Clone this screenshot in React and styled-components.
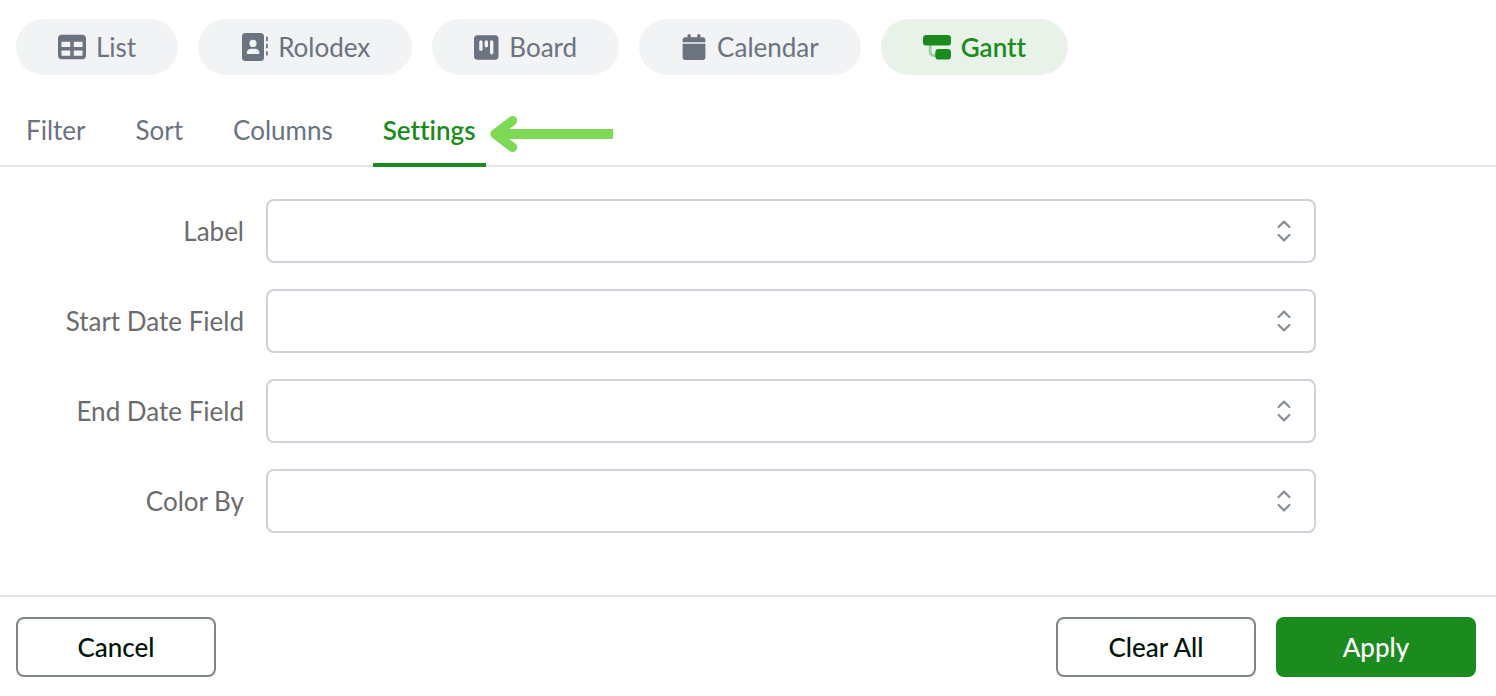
import React, { useState } from "react"
import styled, { createGlobalStyle } from "styled-components"
import { FaCalendar, FaTable } from "react-icons/fa6"

const RolodexIcon = () => (
  <svg width="28" height="28" viewBox="0 0 28 28" fill="currentColor" aria-hidden="true">
    <path
      fillRule="evenodd"
      d="M5.5 0h15A3.5 3.5 0 0 1 24 3.5v21a3.5 3.5 0 0 1-3.5 3.5h-15A3.5 3.5 0 0 1 2 24.5v-21A3.5 3.5 0 0 1 5.5 0zM13 14a3.6 3.6 0 1 0 0-7.2 3.6 3.6 0 0 0 0 7.2zM11 15.7a4.2 4.2 0 0 0-4.2 4.4c0 .6.4 1 .9 1h10.8c.5 0 .9-.4.9-1a4.2 4.2 0 0 0-4.2-4.4z"
    />
    <rect x="26" y="3.5" width="1.8" height="4.6" rx="0.9" />
    <rect x="26" y="10.7" width="1.8" height="4.6" rx="0.9" />
    <rect x="26" y="18" width="1.8" height="4.6" rx="0.9" />
  </svg>
)

const BoardIcon = () => (
  <svg width="25" height="25" viewBox="0 0 25 25" aria-hidden="true">
    <rect width="24.5" height="24.5" y="0.2" rx="3.5" fill="currentColor" />
    <g fill="#f1f3f5">
      <rect x="5.2" y="5.2" width="3.4" height="10.8" rx="1.7" />
      <rect x="10.6" y="5.2" width="3.4" height="7.2" rx="1.7" />
      <rect x="16" y="5.2" width="3.4" height="14.2" rx="1.7" />
    </g>
  </svg>
)

const GanttIcon = () => (
  <svg width="28" height="25" viewBox="0 0 28 25" aria-hidden="true">
    <path d="M7.2 10v7a3.5 3.5 0 0 0 3.5 3.5H13" fill="none" stroke="#a0cea3" strokeWidth="2.8" />
    <rect width="28" height="10.6" rx="3.4" fill="currentColor" />
    <rect x="12.3" y="14" width="15.7" height="10.6" rx="3.4" fill="currentColor" />
  </svg>
)

const Sorter = () => (
  <svg width="14" height="22" viewBox="0 0 14 22" fill="none" stroke="#868e96" aria-hidden="true">
    <path
      d="M1.6 7 7 1.6 12.4 7M1.6 15 7 20.4 12.4 15"
      strokeWidth="2.2"
      strokeLinecap="round"
      strokeLinejoin="round"
    />
  </svg>
)

const views = [
  { name: "List", icon: <FaTable size={28} /> },
  { name: "Rolodex", icon: <RolodexIcon /> },
  { name: "Board", icon: <BoardIcon /> },
  { name: "Calendar", icon: <FaCalendar width={25} height={28} /> },
  { name: "Gantt", icon: <GanttIcon /> },
]

const tabs = ["Filter", "Sort", "Columns", "Settings"]

const fields = [
  { id: "label", text: "Label" },
  { id: "start-date", text: "Start Date Field" },
  { id: "end-date", text: "End Date Field" },
  { id: "color-by", text: "Color By" },
]

const App = () => {
  const [view, setView] = useState("Gantt")
  const [tab, setTab] = useState("Settings")

  return (
    <>
      <GlobalStyle />
      <Views>
        {views.map(({ name, icon }) => (
          <ViewButton key={name} $active={name === view} onClick={() => setView(name)}>
            {icon}
            {name}
          </ViewButton>
        ))}
      </Views>
      <Tabs>
        {tabs.map(name => (
          <Tab key={name} $active={name === tab} onClick={() => setTab(name)}>
            {name}
          </Tab>
        ))}
        <Arrow viewBox="0 0 123 36" aria-hidden="true">
          <path d="M10 18h113" strokeWidth="10" />
          <path d="M22.5 4.7 5 18l17.5 13.3" strokeWidth="9.4" strokeLinecap="round" strokeLinejoin="round" />
        </Arrow>
      </Tabs>
      <Form>
        {fields.map(({ id, text }) => (
          <Field key={id}>
            <Label htmlFor={id}>{text}</Label>
            <SelectWrapper>
              <Select id={id} />
              <Sorter />
            </SelectWrapper>
          </Field>
        ))}
      </Form>
      <Footer>
        <Button>Cancel</Button>
        <Actions>
          <Button>Clear All</Button>
          <Button $primary>Apply</Button>
        </Actions>
      </Footer>
    </>
  )
}

const GlobalStyle = createGlobalStyle`
  * {
    box-sizing: border-box;
  }

  body {
    margin: 0;
    background-color: #fff;
    font-family: Lato, "Liberation Sans", sans-serif;
    font-size: 26px;
    font-variant-ligatures: none;
    line-height: 32px;
  }

  button,
  select {
    font: inherit;
    font-variant-ligatures: none;
    cursor: pointer;
  }
`

const Views = styled.div`
  display: flex;
  gap: 20px;
  padding: 19px 16px 0;
`

const ViewButton = styled.button`
  display: flex;
  align-items: center;
  gap: 10px;
  height: 56px;
  padding: 0 42px;
  border: 0;
  border-radius: 28px;
  background-color: ${({ $active }) => ($active ? "#e8f2e9" : "#f1f3f5")};
  color: ${({ $active }) => ($active ? "#1b8b20" : "#6b7280")};
  font-weight: ${({ $active }) => ($active ? 600 : 400)};

  svg {
    flex-shrink: 0;
  }
`

const Tabs = styled.nav`
  display: flex;
  gap: 30px;
  margin-top: 32px;
  padding: 0 16px;
  border-bottom: 2px solid #e5e6eb;
`

const Tab = styled.button`
  height: 60px;
  margin-bottom: -2px;
  padding: 0 10px 10px;
  border: 0;
  border-bottom: 4px solid ${({ $active }) => ($active ? "#1b8b20" : "transparent")};
  background: none;
  color: ${({ $active }) => ($active ? "#1b8b20" : "#6b7280")};
  font-weight: ${({ $active }) => ($active ? 600 : 400)};
`

const Arrow = styled.svg`
  width: 123px;
  height: 36px;
  margin: 9px 0 0 -26px;
  fill: none;
  stroke: #7ed957;
`

const Form = styled.form`
  display: flex;
  flex-direction: column;
  gap: 26px;
  padding: 32px 180px 62px 0;
`

const Field = styled.div`
  display: flex;
  align-items: center;
  gap: 22px;
`

const Label = styled.label`
  width: 244px;
  color: #6b6b6e;
  text-align: right;
`

const SelectWrapper = styled.div`
  position: relative;
  flex: 1;

  svg {
    position: absolute;
    top: 21px;
    right: 25px;
    pointer-events: none;
  }
`

const Select = styled.select`
  display: block;
  appearance: none;
  width: 100%;
  height: 64px;
  padding: 0 56px 0 20px;
  border: 2px solid #ced2d9;
  border-radius: 8px;
  background-color: #fff;
`

const Footer = styled.footer`
  display: flex;
  justify-content: space-between;
  padding: 20px 20px 19px 16px;
  border-top: 2px solid #e5e6eb;
`

const Actions = styled.div`
  display: flex;
  gap: 20px;
`

const Button = styled.button`
  width: 200px;
  height: 60px;
  border: 2px solid ${({ $primary }) => ($primary ? "#1b8b20" : "#7f8880")};
  border-radius: 8px;
  background-color: ${({ $primary }) => ($primary ? "#1b8b20" : "#fff")};
  color: ${({ $primary }) => ($primary ? "#fff" : "#001408")};
  font-weight: 500;
`

export default App
